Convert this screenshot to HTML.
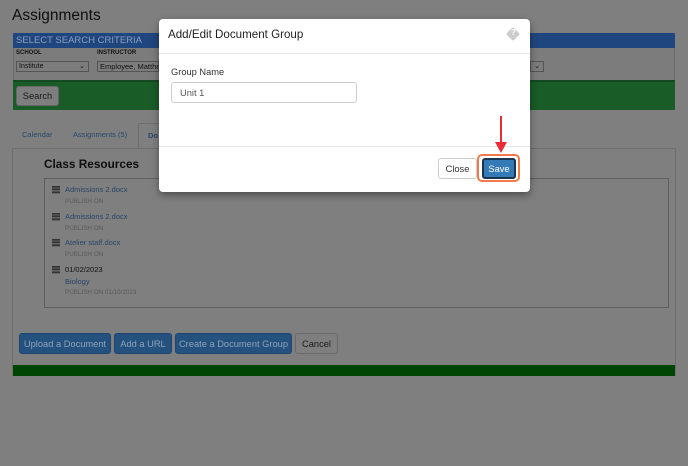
<!DOCTYPE html>
<html><head><style>
*{margin:0;padding:0;box-sizing:border-box}
body{width:688px;height:466px;background:#7f7f7f;font-family:"Liberation Sans",sans-serif;position:relative;overflow:hidden}
.a{position:absolute;white-space:nowrap}
.c{display:flex;align-items:center;justify-content:center}
.btn{position:absolute;white-space:nowrap;background:#24517e;color:#8fa3b8;font-size:9.3px;border-radius:3px;height:21px;border:1px solid #1f4670;display:flex;align-items:center;justify-content:center}
.ic{position:absolute;left:0;top:1px;width:8px;height:8px;background:repeating-linear-gradient(#333 0 1.5px,#666 1.5px 2.7px)}
</style></head><body>
<div class="a" style="left:12px;top:7px;font-size:15.5px;color:#0e0e0e">Assignments</div>
<div class="a" style="left:13px;top:33px;width:662px;height:77px;border:1px solid #6a6a6a;background:#7c7c7c"></div>
<div class="a" style="left:13px;top:33px;width:662px;height:15px;background:#20467f;color:#8aa0c0;font-size:9.5px;padding:2px 0 0 3px">SELECT SEARCH CRITERIA</div>
<div class="a" style="left:16px;top:50px;font-size:6px;font-weight:bold;color:#111">SCHOOL</div>
<div class="a" style="left:97px;top:50px;font-size:6px;font-weight:bold;color:#111">INSTRUCTOR</div>
<div class="a" style="left:16px;top:61px;width:73px;height:11px;border:1px solid #555;font-size:7px;color:#111;padding-left:2px;line-height:9px">Institute<span style="float:right;margin-right:3px">⌄</span></div>
<div class="a" style="left:97px;top:61px;width:62px;height:11px;border:1px solid #555;font-size:7.5px;color:#111;padding-left:2px;line-height:9px;overflow:hidden">Employee, Matthe</div>
<div class="a" style="left:530px;top:61px;width:14px;height:11px;border:1px solid #555;font-size:7px;color:#111;line-height:9px;text-align:center">⌄</div>
<div class="a" style="left:13px;top:80px;width:662px;height:30px;background:#195c27;border-top:2px solid #134a1f"></div>
<div class="a c" style="left:16px;top:86px;width:43px;height:20px;background:#7e7e7e;border:1px solid #666;border-radius:3px;font-size:9.3px;color:#1a1a1a">Search</div>
<div class="a" style="left:22px;top:130px;font-size:7.5px;color:#27486b">Calendar</div>
<div class="a" style="left:73px;top:130px;font-size:7.5px;color:#27486b">Assignments (5)</div>
<div class="a" style="left:138px;top:123px;width:30px;height:26px;background:#7f7f7f;border:1px solid #6e6e6e;border-bottom:none;font-size:7.5px;color:#27486b;font-weight:bold;padding:7px 0 0 9px">Do</div>
<div class="a" style="left:12px;top:148px;width:664px;height:228px;border:1px solid #6e6e6e"></div>
<div class="a" style="left:44px;top:157px;font-size:11.8px;font-weight:bold;color:#0e0e0e">Class Resources</div>
<div class="a" style="left:44px;top:178px;width:625px;height:130px;border:1px solid #5e5e5e"></div>
<div class="a" style="left:52px;top:185px;line-height:9.5px;font-size:6px">
<div style="position:relative;padding-left:13px;height:27px"><span class="ic"></span><span style="color:#26456a;font-size:7.5px">Admissions 2.docx</span><br><span style="color:#5a5a5a;font-size:6.3px">PUBLISH ON</span></div>
<div style="position:relative;padding-left:13px;height:26px"><span class="ic"></span><span style="color:#26456a;font-size:7.5px">Admissions 2.docx</span><br><span style="color:#5a5a5a;font-size:6.3px">PUBLISH ON</span></div>
<div style="position:relative;padding-left:13px;height:27px"><span class="ic"></span><span style="color:#26456a;font-size:7.5px">Atelier staff.docx</span><br><span style="color:#5a5a5a;font-size:6.3px">PUBLISH ON</span></div>
<div style="position:relative;padding-left:13px;line-height:10.5px"><span class="ic"></span><span style="color:#111;font-size:7.5px">01/02/2023</span><br><span style="color:#26456a;font-size:7.5px">Biology</span><br><span style="color:#5a5a5a;font-size:6.3px">PUBLISH ON 01/10/2023</span></div>
</div>
<div class="btn" style="left:19px;top:333px;width:92px">Upload a Document</div>
<div class="btn" style="left:114px;top:333px;width:58px">Add a URL</div>
<div class="btn" style="left:175px;top:333px;width:117px">Create a Document Group</div>
<div class="a c" style="left:295px;top:333px;width:43px;height:21px;border:1px solid #6a6a6a;border-radius:3px;font-size:9.3px;color:#1a1a1a">Cancel</div>
<div class="a" style="left:13px;top:365px;width:662px;height:11px;background:#004500"></div>

<div class="a" style="left:159px;top:19px;width:371px;height:173px;background:#fff;border-radius:4px;box-shadow:0 3px 8px rgba(0,0,0,.4)">
<div class="a" style="left:9px;top:9px;font-size:11.6px;color:#222">Add/Edit Document Group</div>
<div class="a" style="left:349px;top:10px;width:10px;height:10px;background:#ccc;transform:rotate(45deg);border-radius:2px"></div>
<div class="a" style="left:352px;top:9px;font-size:8px;color:#fff;font-weight:bold">?</div>
<div class="a" style="left:0;top:34px;width:371px;height:1px;background:#e5e5e5"></div>
<div class="a" style="left:12px;top:48px;font-size:9.3px;color:#333">Group Name</div>
<div class="a" style="left:12px;top:63px;width:186px;height:21px;border:1px solid #ccc;border-radius:3px;font-size:9.3px;color:#555;padding:5px 0 0 8px">Unit 1</div>
<div class="a" style="left:0;top:127px;width:371px;height:1px;background:#e5e5e5"></div>
<div class="a c" style="left:279px;top:139px;width:39px;height:21px;border:1px solid #ccc;border-radius:3px;font-size:9.3px;color:#333">Close</div>
<div class="a" style="left:318px;top:135px;width:43px;height:28px;border:2px solid #f07a4a;border-radius:5px"></div>
<div class="a c" style="left:323px;top:139px;width:34px;height:21px;background:#337ab7;border:2px solid #1b3550;border-radius:3px;font-size:9.3px;color:#fff">Save</div>
</div>
<svg class="a" style="left:494px;top:116px" width="14" height="38"><line x1="7" y1="0" x2="7" y2="28" stroke="#ee2a36" stroke-width="2"/><path d="M1 26 L13 26 L7 37 Z" fill="#ee2a36"/></svg>
</body></html>
